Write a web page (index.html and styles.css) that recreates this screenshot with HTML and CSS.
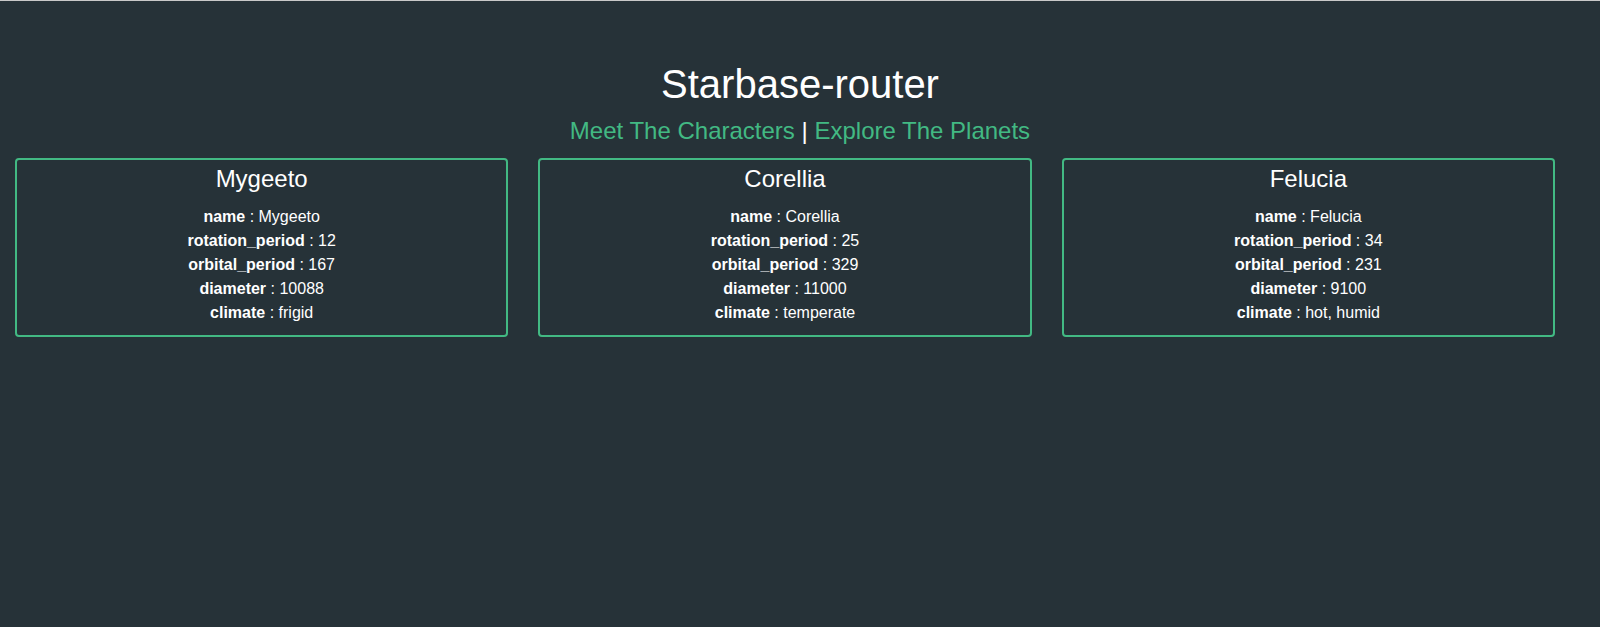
FILE: index.html
```html
<!DOCTYPE html>
<html lang="en">
<head>
<meta charset="utf-8">
<title>Starbase-router</title>
<link rel="stylesheet" href="styles.css">
</head>
<body>
<div class="app">
  <header class="header">
    <h1 class="title">Starbase-router</h1>
    <nav class="nav"><a class="nav-link" href="#">Meet The Characters</a> | <a class="nav-link" href="#">Explore The Planets</a></nav>
  </header>
  <main class="cards">
    <section class="card">
      <h2 class="card-title">Mygeeto</h2>
      <div class="rows">
        <div class="row"><b>name</b> : Mygeeto</div>
        <div class="row"><b>rotation_period</b> : 12</div>
        <div class="row"><b>orbital_period</b> : 167</div>
        <div class="row"><b>diameter</b> : 10088</div>
        <div class="row"><b>climate</b> : frigid</div>
      </div>
    </section>
    <section class="card">
      <h2 class="card-title">Corellia</h2>
      <div class="rows">
        <div class="row"><b>name</b> : Corellia</div>
        <div class="row"><b>rotation_period</b> : 25</div>
        <div class="row"><b>orbital_period</b> : 329</div>
        <div class="row"><b>diameter</b> : 11000</div>
        <div class="row"><b>climate</b> : temperate</div>
      </div>
    </section>
    <section class="card">
      <h2 class="card-title">Felucia</h2>
      <div class="rows">
        <div class="row"><b>name</b> : Felucia</div>
        <div class="row"><b>rotation_period</b> : 34</div>
        <div class="row"><b>orbital_period</b> : 231</div>
        <div class="row"><b>diameter</b> : 9100</div>
        <div class="row"><b>climate</b> : hot, humid</div>
      </div>
    </section>
  </main>
</div>
</body>
</html>
```
FILE: styles.css
```css
html, body {
  margin: 0;
  padding: 0;
  background: #263238;
}
body {
  border-top: 1px solid #c9c9c9;
  min-height: 626px;
  font-family: "Liberation Sans", Arial, sans-serif;
  color: #ffffff;
}
.header {
  text-align: center;
  padding-top: 60px;
}
.title {
  margin: 0;
  font-size: 40px;
  font-weight: normal;
  line-height: 46px;
}
.nav {
  margin-top: 10px;
  font-size: 24px;
  line-height: 28px;
}
.nav-link {
  color: #42b983;
  text-decoration: none;
}
.cards {
  margin-top: 13px;
  padding: 0 45px 0 15px;
  display: grid;
  grid-template-columns: repeat(3, 1fr);
  column-gap: 30px;
  align-items: start;
}
.card {
  border: 2px solid #42b983;
  border-radius: 4px;
  padding: 5px 0 10px;
  text-align: center;
}
.card-title {
  margin: 0 0 12px;
  font-size: 24px;
  font-weight: normal;
  line-height: 28px;
}
.rows {
  font-size: 16px;
  line-height: 24px;
}
```
